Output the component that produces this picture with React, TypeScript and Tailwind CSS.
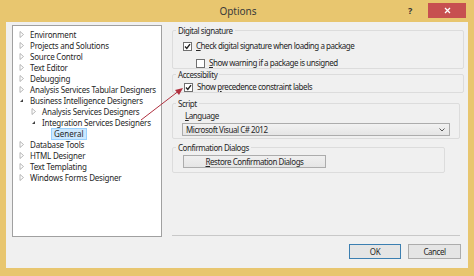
import React from 'react';

type Node = { label: string; level: number; state: 'closed' | 'open' | 'leaf'; selected?: boolean };

const tree: Node[] = [
  { label: 'Environment', level: 0, state: 'closed' },
  { label: 'Projects and Solutions', level: 0, state: 'closed' },
  { label: 'Source Control', level: 0, state: 'closed' },
  { label: 'Text Editor', level: 0, state: 'closed' },
  { label: 'Debugging', level: 0, state: 'closed' },
  { label: 'Analysis Services Tabular Designers', level: 0, state: 'closed' },
  { label: 'Business Intelligence Designers', level: 0, state: 'open' },
  { label: 'Analysis Services Designers', level: 1, state: 'closed' },
  { label: 'Integration Services Designers', level: 1, state: 'open' },
  { label: 'General', level: 2, state: 'leaf', selected: true },
  { label: 'Database Tools', level: 0, state: 'closed' },
  { label: 'HTML Designer', level: 0, state: 'closed' },
  { label: 'Text Templating', level: 0, state: 'closed' },
  { label: 'Windows Forms Designer', level: 0, state: 'closed' },
];

function Toggle({ state }: { state: Node['state'] }) {
  if (state === 'leaf') return <span className="w-[9px]" />;
  return (
    <svg width="9" height="9" viewBox="0 0 9 9" className="shrink-0">
      {state === 'closed' ? (
        <path d="M3 1.5 L6.5 4.5 L3 7.5 Z" fill="none" stroke="#a6a6a6" strokeWidth="0.8" />
      ) : (
        <path d="M6 3 L6 6 L3 6 Z" fill="#404040" />
      )}
    </svg>
  );
}

function Check({ checked }: { checked: boolean }) {
  return (
    <span className="w-[9px] h-[9px] border border-[#707070] bg-white flex items-center justify-center shrink-0">
      {checked && (
        <svg width="7" height="7" viewBox="0 0 7 7">
          <path d="M1 3.6 L2.8 5.4 L6 1.2" fill="none" stroke="#222" strokeWidth="1.4" />
        </svg>
      )}
    </span>
  );
}

function Group({ title, className, children }: { title: string; className?: string; children: React.ReactNode }) {
  return (
    <fieldset className={`border border-[#dcdcdc] rounded-[2px] ${className ?? ''}`}>
      <legend className="ml-[3px] px-[2px] leading-[9px]">{title}</legend>
      {children}
    </fieldset>
  );
}

export default function App() {
  return (
    <div
      className="relative w-[474px] h-[276px] bg-[#e8c66f] flex flex-col text-[8px] text-[#262626] overflow-hidden"
      style={{ fontFamily: '"Noto Sans", "Open Sans", sans-serif' }}
    >
      {/* Title bar */}
      <div className="h-[22px] shrink-0 flex items-center relative">
        <div className="flex-1 text-center text-[10px] text-[#3a3a3a] pl-[2px]">Options</div>
        <span className="absolute left-[408px] top-[4px] text-[9px] text-[#333] font-bold">?</span>
        <div className="absolute left-[428px] top-[3px] w-[38px] h-[15px] bg-[#c75050] flex items-center justify-center">
          <svg width="7" height="7" viewBox="0 0 7 7">
            <path d="M1 1 L6 6 M6 1 L1 6" stroke="#fff" strokeWidth="1.3" />
          </svg>
        </div>
      </div>

      {/* Client area */}
      <div className="mx-[6px] mb-[8px] flex-1 bg-[#f0f0f0] flex pl-[6px] pr-[4px] pt-[3px]">
        {/* Tree */}
        <div className="w-[150px] h-[212px] bg-white border border-[#a0a0a0] pt-[3px] flex flex-col shrink-0">
          {tree.map((n) => (
            <div key={n.label} className="h-[11px] flex items-center" style={{ paddingLeft: 4 + n.level * 12 }}>
              <Toggle state={n.state} />
              <span
                className={
                  n.selected
                    ? 'ml-[1px] px-[2px] bg-[#cce8ff] border border-[#99d1ff] leading-[10px]'
                    : 'ml-[4px] whitespace-nowrap tracking-[-0.2px]'
                }
              >
                {n.label}
              </span>
            </div>
          ))}
        </div>

        {/* Right panel */}
        <div className="flex-1 ml-[10px] flex flex-col tracking-[-0.45px]">
          <Group title="Digital signature" className="h-[43px] mt-[1px]">
            <div className="pl-[10px] pt-[5px] flex items-center gap-[4px]">
              <Check checked />
              <span><u>C</u>heck digital signature when loading a package</span>
            </div>
            <div className="pl-[23px] pt-[5px] flex items-center gap-[4px]">
              <Check checked={false} />
              <span><u>S</u>how warning if a package is unsigned</span>
            </div>
          </Group>

          <Group title="Accessibility" className="h-[23px] mt-[1px]">
            <div className="pl-[11px] pt-[2px] flex items-center gap-[4px]">
              <Check checked />
              <span>Show <u>p</u>recedence constraint labels</span>
            </div>
          </Group>

          <Group title="Script" className="h-[40px] mt-[6px] mr-[4px]">
            <div className="pl-[12px] pt-[2px]"><u>L</u>anguage</div>
            <div className="ml-[9px] mr-[9px] mt-[1px] h-[13px] border border-[#acacac] bg-gradient-to-b from-[#f2f2f2] to-[#e5e5e5] flex items-center px-[3px] justify-between">
              <span>Microsoft Visual C# 2012</span>
              <svg width="6" height="4" viewBox="0 0 6 4" className="mr-[1px]">
                <path d="M0.5 0.5 L3 3 L5.5 0.5" fill="none" stroke="#555" strokeWidth="1" />
              </svg>
            </div>
          </Group>

          <Group title="Confirmation Dialogs" className="h-[30px] mt-[4px] mr-[19px]">
            <div className="ml-[10px] mt-[3px] w-[143px] h-[13px] border border-[#acacac] bg-gradient-to-b from-[#f0f0f0] to-[#e5e5e5] flex items-center justify-center">
              <span><u>R</u>estore Confirmation Dialogs</span>
            </div>
          </Group>

          <div className="flex-1" />
          <div className="h-px bg-[#c8c8c8] mr-[4px]" />
          <div className="flex justify-end gap-[7px] mr-[3px] mt-[8px] mb-[9px]">
            <div className="w-[52px] h-[15px] border border-[#3c7fb1] bg-[#e5e5e5] flex items-center justify-center">OK</div>
            <div className="w-[53px] h-[15px] border border-[#acacac] bg-[#e5e5e5] flex items-center justify-center">Cancel</div>
          </div>
        </div>
      </div>

      {/* Callout arrow */}
      <svg className="absolute left-0 top-0 pointer-events-none" width="474" height="276">
        <line x1="141" y1="120" x2="180" y2="90" stroke="#b0303f" strokeWidth="1" />
        <path d="M183 88 L175 90 L179 95 Z" fill="#b0303f" />
      </svg>
    </div>
  );
}
